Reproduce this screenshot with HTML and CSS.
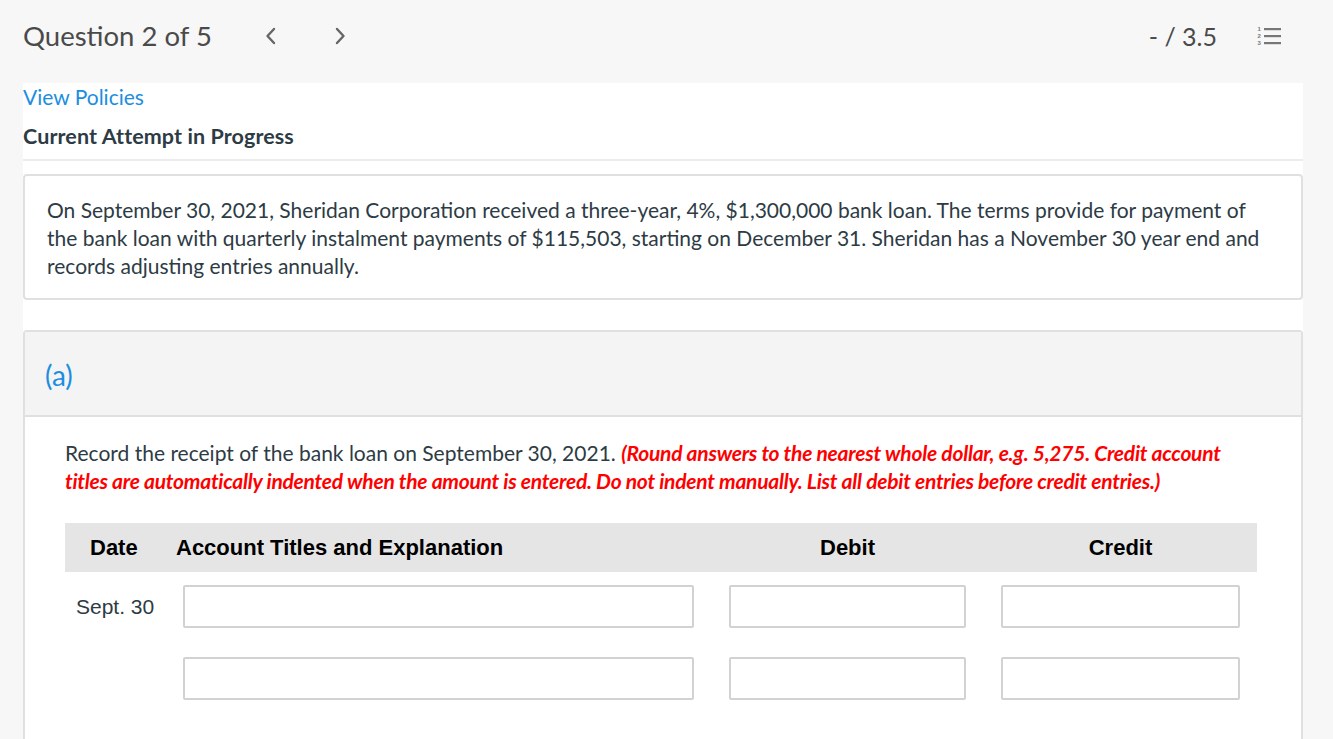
FILE: index.html
```html
<!DOCTYPE html>
<html lang="en">
<head>
<meta charset="utf-8">
<title>Question 2 of 5</title>
<link rel="stylesheet" href="styles.css">
</head>
<body>
<header class="topbar">
  <div class="topbar-left">
    <h1 class="qtitle">Question 2 of 5</h1>
    <span class="nav-btn nav-prev">
      <svg width="12" height="18" viewBox="0 0 12 18"><path d="M10 2 L3.5 9 L10 16" fill="none" stroke="#666" stroke-width="2.4" stroke-linecap="round" stroke-linejoin="round"/></svg>
    </span>
    <span class="nav-btn nav-next">
      <svg width="12" height="18" viewBox="0 0 12 18"><path d="M2 2 L8.5 9 L2 16" fill="none" stroke="#666" stroke-width="2.4" stroke-linecap="round" stroke-linejoin="round"/></svg>
    </span>
  </div>
  <div class="topbar-right">
    <span class="score">- / 3.5</span>
    <span class="list-icon">
      <svg width="26" height="22" viewBox="0 0 26 22">
        <text x="1.5" y="6" class="tiny">1</text>
        <text x="1.5" y="13" class="tiny">2</text>
        <text x="1.5" y="20" class="tiny">3</text>
        <rect x="8" y="3" width="17" height="2.2" fill="#777"/>
        <rect x="8" y="10" width="17" height="2.2" fill="#777"/>
        <rect x="8" y="17" width="17" height="2.2" fill="#777"/>
      </svg>
    </span>
  </div>
</header>

<main class="panel">
  <a class="policies" href="#">View Policies</a>
  <h2 class="attempt">Current Attempt in Progress</h2>

  <section class="question-box">
    <p>On September 30, 2021, Sheridan Corporation received a three-year, 4%, $1,300,000 bank loan. The terms provide for payment of the bank loan with quarterly instalment payments of $115,503, starting on December 31. Sheridan has a November 30 year end and records adjusting entries annually.</p>
  </section>

  <section class="part">
    <div class="part-head">(a)</div>
    <div class="part-body">
      <p class="instructions">Record the receipt of the bank loan on September 30, 2021. <em class="warn">(Round answers to the nearest whole dollar, e.g. 5,275. Credit account titles are automatically indented when the amount is entered. Do not indent manually. List all debit entries before credit entries.)</em></p>

      <div class="journal">
        <div class="jrow jhead">
          <div class="c-date">Date</div>
          <div class="c-acct">Account Titles and Explanation</div>
          <div class="c-num">Debit</div>
          <div class="c-num">Credit</div>
        </div>
        <div class="jrow">
          <div class="c-date">Sept. 30</div>
          <input class="field" type="text">
          <input class="field" type="text">
          <input class="field" type="text">
        </div>
        <div class="jrow">
          <div class="c-date"></div>
          <input class="field" type="text">
          <input class="field" type="text">
          <input class="field" type="text">
        </div>
      </div>
    </div>
  </section>
</main>
</body>
</html>
```

FILE: styles.css
```css
* { box-sizing: border-box; }

html, body {
  margin: 0;
  padding: 0;
}

body {
  background: #f7f7f7;
  font-family: Lato, "Open Sans", sans-serif;
  color: #2d3b45;
  overflow: hidden;
}

.topbar {
  height: 83px;
  padding: 21px 51px 0 23px;
  display: flex;
  justify-content: space-between;
  align-items: flex-start;
}

.topbar-left {
  display: flex;
  align-items: center;
}

.qtitle {
  margin: 0;
  font-size: 27.5px;
  font-weight: 400;
  line-height: 30px;
  color: #4a4a4a;
}

.nav-btn {
  display: flex;
  align-items: center;
  height: 30px;
}

.nav-prev { margin-left: 52px; }
.nav-next { margin-left: 59px; }

.topbar-right {
  display: flex;
  align-items: center;
}

.score {
  font-size: 25px;
  line-height: 30px;
  color: #4a4a4a;
}

.list-icon {
  margin-left: 39px;
  display: flex;
  align-items: center;
  height: 30px;
}

.tiny {
  font-family: "Liberation Sans", sans-serif;
  font-size: 6px;
  font-weight: 700;
  fill: #777;
}

.panel {
  margin-left: 23px;
  width: 1280px;
  height: 656px;
  background: #fff;
  overflow: hidden;
}

.policies {
  display: block;
  font-size: 21px;
  line-height: 28px;
  color: #1b8ee0;
  text-decoration: none;
}

.attempt {
  margin: 11px 0 0;
  font-size: 21.5px;
  font-weight: 700;
  line-height: 28px;
  letter-spacing: 0.1px;
  color: #2d3b45;
  padding-bottom: 9px;
  border-bottom: 2px solid #ececec;
}

.question-box {
  margin-top: 13px;
  border: 2px solid #e0e0e0;
  border-radius: 4px;
  padding: 20px 22px 18px;
}

.question-box p {
  margin: 0;
  font-size: 21px;
  line-height: 28px;
}

.part {
  margin-top: 30px;
  border: 2px solid #e0e0e0;
  border-bottom: none;
  border-radius: 4px 4px 0 0;
}

.part-head {
  height: 85px;
  background: #f4f4f4;
  border-bottom: 2px solid #e0e0e0;
  padding: 28px 20px 0;
  font-size: 28px;
  line-height: 30px;
  color: #1b8ee0;
}

.part-body {
  padding: 22px 44px 60px 40px;
}

.instructions {
  margin: 0;
  font-size: 21px;
  line-height: 28px;
}

.warn {
  color: #ff0000;
  font-weight: 700;
  font-style: italic;
  letter-spacing: -0.25px;
}

.journal {
  margin-top: 28px;
  width: 1192px;
  font-family: "Liberation Sans", Arial, sans-serif;
}

.jrow {
  display: grid;
  grid-template-columns: 83px 511px 237px 239px;
  column-gap: 35px;
  align-items: center;
  padding: 13px 0 16px;
}

.jhead {
  height: 49px;
  padding: 0;
  background: #e5e5e5;
  font-weight: 700;
  font-size: 22px;
  color: #000;
}

.jhead .c-date {
  padding-left: 25px;
  font-size: 22px;
  color: #000;
}

.jhead .c-acct {
  margin-left: -7px;
  white-space: nowrap;
}

.c-num {
  text-align: center;
}

.c-date {
  padding-left: 11px;
  font-size: 21px;
  color: #2d3b45;
  white-space: nowrap;
}

.field {
  height: 43px;
  width: 100%;
  border: 2px solid #d2d2d2;
  border-radius: 2px;
  background: #fff;
  margin: 0;
  padding: 0 8px;
  font: inherit;
}
```
